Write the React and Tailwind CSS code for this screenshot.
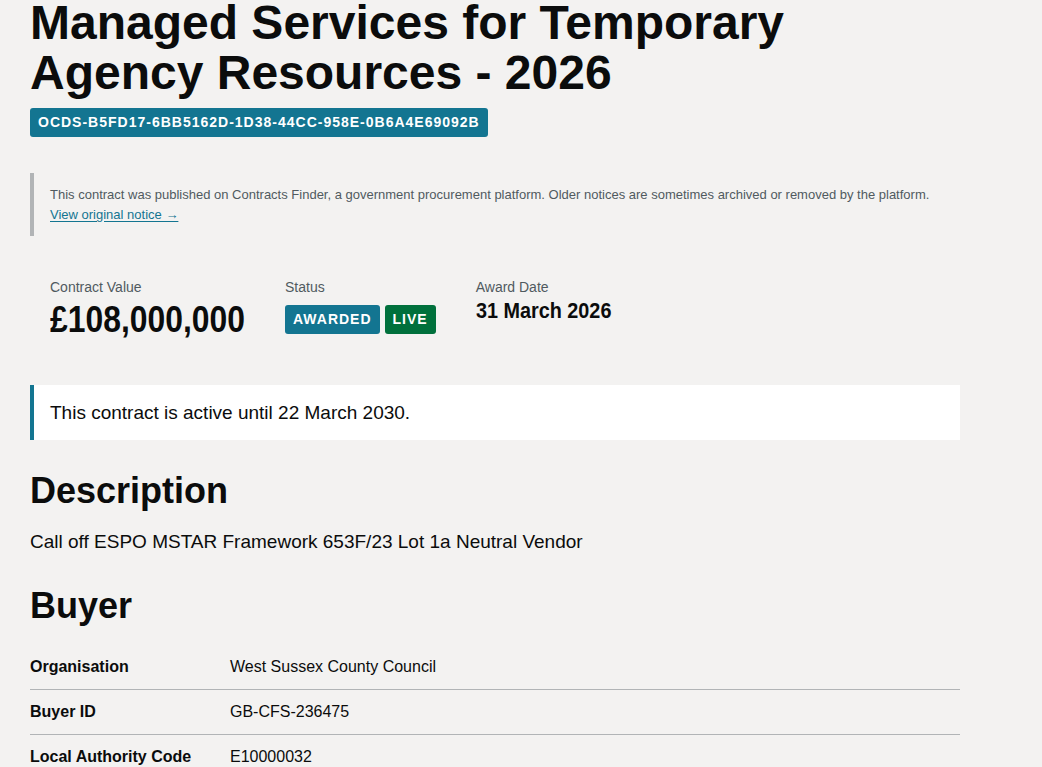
import React from "react";

const badge =
  "inline-block rounded-[3px] px-2 py-[5px] text-[14px] leading-[19px] font-bold tracking-[1px] text-white uppercase";

const buyerRows = [
  { label: "Organisation", value: "West Sussex County Council" },
  { label: "Buyer ID", value: "GB-CFS-236475" },
  { label: "Local Authority Code", value: "E10000032" },
];

export default function App() {
  return (
    <div className="min-h-screen bg-[#f3f2f1] text-[#0b0c0c] font-['Liberation_Sans',Arial,sans-serif] overflow-hidden">
      <div className="w-[990px] px-[30px] pb-10">
        <h1 className="mt-[-2px] text-[48px] leading-[50px] font-bold">
          Managed Services for Temporary
          <br />
          Agency Resources - 2026
        </h1>
        <div className="mt-[10px]">
          <span className={`${badge} bg-[#137591]`}>OCDS-B5FD17-6BB5162D-1D38-44CC-958E-0B6A4E69092B</span>
        </div>

        {/* archived notice */}
        <div className="mt-[36px] border-l-4 border-[#b1b4b6] pl-4 pt-[12px] pb-[11px] text-[13px] leading-[20px] text-[#505a5f]">
          <p>
            This contract was published on Contracts Finder, a government procurement platform. Older notices are
            sometimes archived or removed by the platform.
          </p>
          <a href="#" className="text-[#137591] underline underline-offset-2">
            View original notice →
          </a>
        </div>

        {/* key facts */}
        <div className="mt-[41px] pl-5 flex gap-10">
          <div className="w-[195px]">
            <p className="text-[14px] leading-[20px] text-[#505a5f]">Contract Value</p>
            <p className="mt-[3px] text-[36px] leading-[40px] font-bold whitespace-nowrap origin-left scale-x-[0.885]">
              £108,000,000
            </p>
          </div>
          <div>
            <p className="text-[14px] leading-[20px] text-[#505a5f]">Status</p>
            <div className="mt-[8px] flex gap-[5px]">
              <span className={`${badge} bg-[#137591]`}>Awarded</span>
              <span className={`${badge} bg-[#00703c]`}>Live</span>
            </div>
          </div>
          <div>
            <p className="text-[14px] leading-[20px] text-[#505a5f]">Award Date</p>
            <p className="text-[22px] leading-[28px] font-bold whitespace-nowrap origin-left scale-x-[0.9]">
              31 March 2026
            </p>
          </div>
        </div>

        <div className="mt-[45px] bg-white border-l-4 border-[#137591] pl-4 py-[15px] text-[19px] leading-[25px]">
          This contract is active until 22 March 2030.
        </div>

        <h2 className="mt-[31px] text-[36px] leading-[40px] font-bold">Description</h2>
        <p className="mt-[18px] text-[19px] leading-[25px]">
          Call off ESPO MSTAR Framework 653F/23 Lot 1a Neutral Vendor
        </p>

        <h2 className="mt-[32px] text-[36px] leading-[40px] font-bold">Buyer</h2>
        <dl className="mt-[19px] text-[16px] leading-[20px]">
          {buyerRows.map((row) => (
            <div key={row.label} className="flex py-3 border-b border-[#b1b4b6]">
              <dt className="w-[200px] font-bold">{row.label}</dt>
              <dd>{row.value}</dd>
            </div>
          ))}
        </dl>
      </div>
    </div>
  );
}
